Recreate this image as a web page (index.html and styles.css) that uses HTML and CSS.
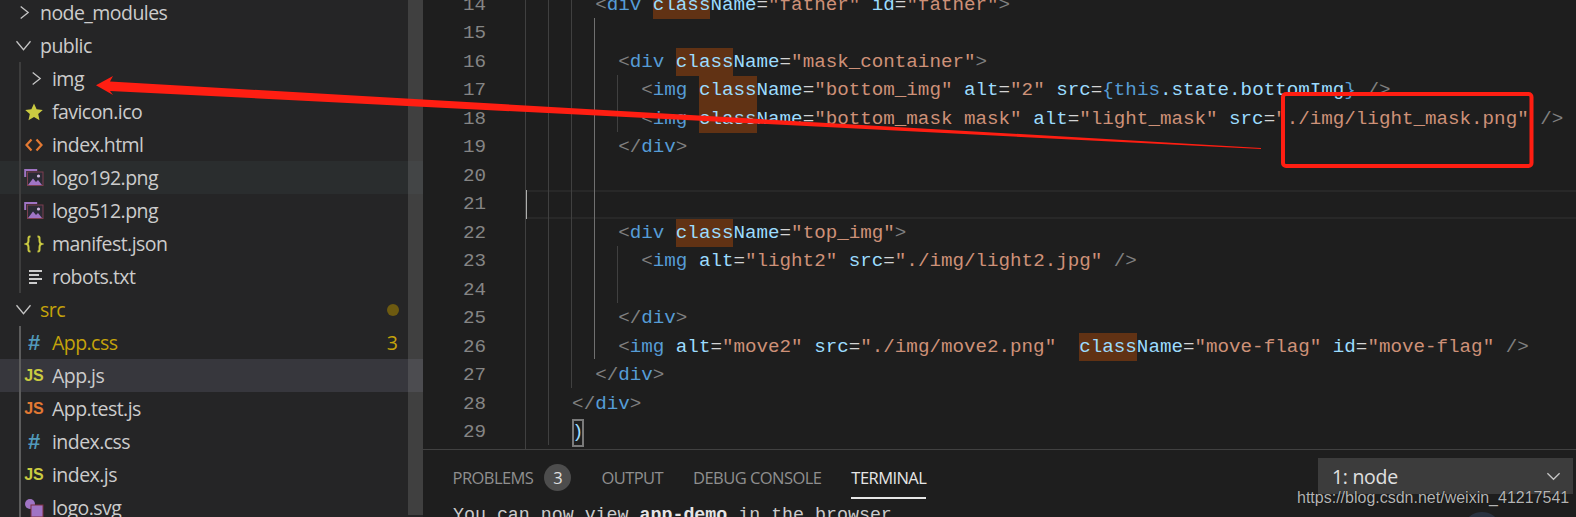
FILE: index.html
```html
<!DOCTYPE html>
<html lang="en">
<head>
<meta charset="utf-8">
<title>VS Code</title>
<link rel="stylesheet" href="styles.css">
</head>
<body>
<div class="app">
  <aside class="sidebar">
    <div class="tree">
      <div class="row depth0"><svg class="chev" viewBox="0 0 16 16"><path d="M5 1.500 13 8l-8 6.500"/></svg><span class="name">node_modules</span></div>
      <div class="row depth0"><svg class="chev" viewBox="0 0 16 16"><path d="M.5 3.500 8 12.500 15.500 3.500"/></svg><span class="name">public</span></div>
      <div class="row depth1 folder"><svg class="chev" viewBox="0 0 16 16"><path d="M5 1.500 13 8l-8 6.500"/></svg><span class="name">img</span></div>
      <div class="row depth1"><svg class="icon" viewBox="0 0 20 20"><path fill="#cbcb41" d="M10 1.500l2.600 5.700 6.200.7-4.600 4.200 1.300 6.100L10 15.100l-5.500 3.100 1.300-6.100L1.200 7.900l6.200-.7z"/></svg><span class="name">favicon.ico</span></div>
      <div class="row depth1"><svg class="icon" viewBox="0 0 20 20"><path fill="none" stroke="#e37933" stroke-width="2.200" d="M7.500 4.500 2.500 10l5 5.500M12.500 4.500l5 5.500-5 5.500"/></svg><span class="name">index.html</span></div>
      <div class="row depth1 hover"><svg class="icon" viewBox="0 0 20 20"><path fill="none" stroke="#a074c4" stroke-width="2" d="M1.200 9V2h12"/><rect x="3.500" y="4" width="15.500" height="13.500" fill="#2b2b35" stroke="#7c3f50"/><path fill="#a074c4" d="M4 17l5-6.500 3 3.500 2-2 4 5z"/><circle cx="14.500" cy="8" r="1.600" fill="#d0b8e0"/></svg><span class="name">logo192.png</span></div>
      <div class="row depth1"><svg class="icon" viewBox="0 0 20 20"><path fill="none" stroke="#a074c4" stroke-width="2" d="M1.200 9V2h12"/><rect x="3.500" y="4" width="15.500" height="13.500" fill="#2b2b35" stroke="#7c3f50"/><path fill="#a074c4" d="M4 17l5-6.500 3 3.500 2-2 4 5z"/><circle cx="14.500" cy="8" r="1.600" fill="#d0b8e0"/></svg><span class="name">logo512.png</span></div>
      <div class="row depth1"><svg class="icon" viewBox="0 0 20 20"><path fill="none" stroke="#cbcb41" stroke-width="2" d="M6.500 2.500C4 2.500 4.500 4 4.500 6.500c0 2.200-.5 3-2 3.500 1.500.5 2 1.300 2 3.500 0 2.500-.5 4 2 4M13.500 2.500c2.500 0 2 1.500 2 4 0 2.200.5 3 2 3.500-1.500.5-2 1.300-2 3.500 0 2.500.5 4-2 4"/></svg><span class="name">manifest.json</span></div>
      <div class="row depth1"><svg class="icon" viewBox="0 0 20 20"><path fill="none" stroke="#cccccc" stroke-width="2" d="M5 4h13M5 8h10M5 12h13M5 16h8"/></svg><span class="name">robots.txt</span></div>
      <div class="row depth0 modified"><svg class="chev" viewBox="0 0 16 16"><path d="M.5 3.500 8 12.500 15.500 3.500"/></svg><span class="name">src</span><span class="dot"></span></div>
      <div class="row depth1 child modified"><span class="icon glyph hash">#</span><span class="name">App.css</span><span class="count">3</span></div>
      <div class="row depth1 child selected"><span class="icon glyph js">JS</span><span class="name">App.js</span></div>
      <div class="row depth1 child"><span class="icon glyph test">JS</span><span class="name">App.test.js</span></div>
      <div class="row depth1 child"><span class="icon glyph hash">#</span><span class="name">index.css</span></div>
      <div class="row depth1 child"><span class="icon glyph js">JS</span><span class="name">index.js</span></div>
      <div class="row depth1 child"><svg class="icon" viewBox="0 0 20 20"><circle cx="6" cy="6" r="5" fill="#a074c4"/><rect x="7" y="7" width="12" height="12" fill="#a074c4" stroke="#7c3040"/></svg><span class="name">logo.svg</span></div>
    </div>
    <span class="tree-guide g-public"></span>
    <span class="tree-guide g-src"></span>
    <span class="scrollbar"></span>
  </aside>
  <main class="main">
    <section class="editor">
      <div class="code">
        <div class="line"><span class="num">14</span><span class="src">      <b class="p">&lt;</b><b class="t">div</b> <b class="hl a">class</b><b class="a">Name</b><b class="p2">=</b><b class="s">"father"</b> <b class="a">id</b><b class="p2">=</b><b class="s">"father"</b><b class="p">&gt;</b></span></div>
        <div class="line"><span class="num">15</span><span class="src"></span></div>
        <div class="line"><span class="num">16</span><span class="src">        <b class="p">&lt;</b><b class="t">div</b> <b class="hl a">class</b><b class="a">Name</b><b class="p2">=</b><b class="s">"mask_container"</b><b class="p">&gt;</b></span></div>
        <div class="line"><span class="num">17</span><span class="src">          <b class="p">&lt;</b><b class="t">img</b> <b class="hl a">class</b><b class="a">Name</b><b class="p2">=</b><b class="s">"bottom_img"</b> <b class="a">alt</b><b class="p2">=</b><b class="s">"2"</b> <b class="a">src</b><b class="p2">=</b><b class="t">{this</b><b class="a">.state.bottomImg</b><b class="t">}</b> <b class="p">/&gt;</b></span></div>
        <div class="line"><span class="num">18</span><span class="src">          <b class="p">&lt;</b><b class="t">img</b> <b class="hl a">class</b><b class="a">Name</b><b class="p2">=</b><b class="s">"bottom_mask mask"</b> <b class="a">alt</b><b class="p2">=</b><b class="s">"light_mask"</b> <b class="a">src</b><b class="p2">=</b><b class="s">"./img/light_mask.png"</b> <b class="p">/&gt;</b></span></div>
        <div class="line"><span class="num">19</span><span class="src">        <b class="p">&lt;/</b><b class="t">div</b><b class="p">&gt;</b></span></div>
        <div class="line"><span class="num">20</span><span class="src"></span></div>
        <div class="line current"><span class="num">21</span><span class="src"></span></div>
        <div class="line"><span class="num">22</span><span class="src">        <b class="p">&lt;</b><b class="t">div</b> <b class="hl a">class</b><b class="a">Name</b><b class="p2">=</b><b class="s">"top_img"</b><b class="p">&gt;</b></span></div>
        <div class="line"><span class="num">23</span><span class="src">          <b class="p">&lt;</b><b class="t">img</b> <b class="a">alt</b><b class="p2">=</b><b class="s">"light2"</b> <b class="a">src</b><b class="p2">=</b><b class="s">"./img/light2.jpg"</b> <b class="p">/&gt;</b></span></div>
        <div class="line"><span class="num">24</span><span class="src"></span></div>
        <div class="line"><span class="num">25</span><span class="src">        <b class="p">&lt;/</b><b class="t">div</b><b class="p">&gt;</b></span></div>
        <div class="line"><span class="num">26</span><span class="src">        <b class="p">&lt;</b><b class="t">img</b> <b class="a">alt</b><b class="p2">=</b><b class="s">"move2"</b> <b class="a">src</b><b class="p2">=</b><b class="s">"./img/move2.png"</b>  <b class="hl a">class</b><b class="a">Name</b><b class="p2">=</b><b class="s">"move-flag"</b> <b class="a">id</b><b class="p2">=</b><b class="s">"move-flag"</b> <b class="p">/&gt;</b></span></div>
        <div class="line"><span class="num">27</span><span class="src">      <b class="p">&lt;/</b><b class="t">div</b><b class="p">&gt;</b></span></div>
        <div class="line"><span class="num">28</span><span class="src">    <b class="p">&lt;/</b><b class="t">div</b><b class="p">&gt;</b></span></div>
        <div class="line"><span class="num">29</span><span class="src">    <b class="match">)</b></span></div>
      </div>
      <span class="guide g1"></span>
      <span class="guide g2"></span>
      <span class="guide g3"></span>
      <span class="guide g4"></span>
      <span class="guide g5"></span>
      <span class="guide g6"></span>
    </section>
    <section class="panel">
      <div class="tabs">
        <span class="tab">PROBLEMS</span><span class="badge">3</span>
        <span class="tab">OUTPUT</span>
        <span class="tab">DEBUG CONSOLE</span>
        <span class="tab active">TERMINAL</span>
        <div class="select"><span>1: node</span><svg class="select-chev" viewBox="0 0 16 16"><path d="M1.500 4.500 8 11l6.500-6.500"/></svg></div>
      </div>
      <div class="terminal">You can now view <strong>app-demo</strong> in the browser.</div>
    </section>
  </main>
</div>
<svg class="annotations" viewBox="0 0 1576 517">
  <polygon class="ink" points="96,85.300 113,76 110,81.500 1261,148 1261,149 110,91 113,95"/>
  <rect class="frame" x="1283" y="94" width="248.500" height="72" rx="3"/>
</svg>
<span class="blob"></span>
<span class="watermark">https://blog.csdn.net/weixin_41217541</span>
</body>
</html>
```
FILE: styles.css
```css
* { box-sizing: border-box; }
html, body { margin: 0; height: 100%; overflow: hidden; background: #1e1e1e; }
b { font-weight: normal; }

.app { display: flex; width: 1576px; height: 517px; overflow: hidden; }

/* explorer */
.sidebar { position: relative; flex: 0 0 423px; background: #252526; overflow: hidden;
  font: 19.5px/33px "Open Sans", "Noto Sans", sans-serif; color: #cccccc; }
.tree { display: flex; flex-direction: column; margin-top: -4px; }
.row { display: flex; align-items: center; height: 33px; flex: none; position: relative; padding-right: 25px; }
.depth0 { padding-left: 16px; }
.depth0 .chev { width: 15px; height: 15px; margin-right: 9px; }
.depth1 { padding-left: 24px; }
.folder { padding-left: 27.500px; }
.folder .chev { width: 15px; height: 15px; margin-right: 9.500px; }
.chev { flex: none; fill: none; stroke: #c5c5c5; stroke-width: 1.400; }
.icon { flex: none; width: 20px; height: 20px; margin-right: 8px; }
.name { white-space: pre; letter-spacing: -.55px; }
.hover { background: #2a2d2e; }
.selected { background: #37373d; }
.modified { color: #c5a30a; }
.glyph { display: flex; align-items: center; justify-content: center; font-family: "Liberation Sans", sans-serif; font-weight: 700; line-height: 20px; }
.hash { font-size: 22px; color: #519aba; }
.js { font-size: 16px; color: #cbcb41; }
.test { font-size: 16px; color: #e37933; }
.dot { width: 12px; height: 12px; border-radius: 50%; background: #6d5a10; margin-left: auto; margin-right: -1px; }
.count { margin-left: auto; line-height: 33px; }
.tree-guide { position: absolute; left: 19px; width: 2px; }
.g-public { top: 62px; height: 231px; background: #3d3d3d; }
.g-src { top: 326px; bottom: 0; background: #5c5c5c; }
.scrollbar { position: absolute; left: 408px; top: 0; width: 15px; height: 515px; background: rgba(121, 121, 121, .32); }

/* editor */
.main { flex: 1; display: flex; flex-direction: column; min-width: 0; }
.editor { position: relative; height: 449px; flex: none; overflow: hidden; background: #1e1e1e; }
.code { display: flex; flex-direction: column; margin-top: -9px;
  font: 19.220px/28.470px "Liberation Mono", "DejaVu Sans Mono", monospace; }
.line { display: flex; height: 28.470px; flex: none; position: relative; }
.num { flex: none; width: 63px; text-align: right; color: #858585; }
.src { flex: 1; margin-left: 40px; white-space: pre; color: #d4d4d4; }
.current .src { margin-left: 39px; box-shadow: inset 0 2px #282828, inset 0 -2px #282828; border-left: 2px solid #aeafad; }
.p { color: #808080; }
.p2 { color: #d4d4d4; }
.t { color: #569cd6; }
.a { color: #9cdcfe; }
.s { color: #ce9178; }
.hl { display: inline-block; background: #613214; }
.match { display: inline-block; height: 28px; line-height: 26px; color: #9cdcfe; outline: 2px solid #7a7a7a; outline-offset: -2px; }

.guide { position: absolute; width: 1px; background: #404040; }
.g1 { left: 102px; top: 0; bottom: 0; }
.g2 { left: 125px; top: 0; bottom: 4px; }
.g3 { left: 148px; top: 0; height: 388px; }
.g4 { left: 171px; top: 18px; height: 341px; background: #707070; }
.g5 { left: 194px; top: 75px; height: 57px; }
.g6 { left: 194px; top: 246px; height: 57px; }

/* panel */
.panel { flex: 1; position: relative; border-top: 1px solid #414141; background: #1e1e1e; overflow: hidden; }
.tabs { display: flex; align-items: center; height: 54px; padding-left: 29.500px; font: 16.500px/27px "Open Sans", "Noto Sans", sans-serif; color: #8f8f8f; letter-spacing: -.55px; }
.tab { position: relative; white-space: pre; margin-right: 30px; }
.tab:first-child { margin-right: 11px; }
.active { color: #e7e7e7; }
.active::after { content: ""; position: absolute; left: 0; right: 0; top: 33px; height: 2px; background: #e7e7e7; }
.badge { display: flex; align-items: center; justify-content: center; width: 27px; height: 27px; border-radius: 50%; background: #4d4d4d; color: #e0e0e0; margin-right: 30px; letter-spacing: 0; }
.select { position: absolute; left: 895px; top: 8px; width: 255px; height: 36px; padding: 0 12px 0 14px; display: flex; align-items: center; justify-content: space-between; background: #3c3c3c; color: #e0e0e0; font-size: 19.500px; letter-spacing: -.3px; }
.select-chev { width: 15px; height: 15px; fill: none; stroke: #c5c5c5; stroke-width: 1.400; }
.terminal { padding: 1px 0 0 30px; font: 18.300px/20px "Liberation Mono", monospace; color: #cccccc; white-space: pre; }
.terminal strong { color: #e5e5e5; }

/* screenshot annotations */
.annotations { position: absolute; left: 0; top: 0; width: 1576px; height: 517px; pointer-events: none; }
.ink { fill: #ff1e12; }
.frame { fill: none; stroke: #ff1e12; stroke-width: 4; }
.blob { position: absolute; left: 1467px; top: 512px; width: 30px; height: 20px; border-radius: 50%; background: #2a3240; }
.watermark { position: absolute; left: 1297px; top: 487px; font: 16px/22px "Liberation Sans", Arial, sans-serif; color: #b4b4b4; white-space: pre; text-shadow: 0 0 1px #000; }
```
